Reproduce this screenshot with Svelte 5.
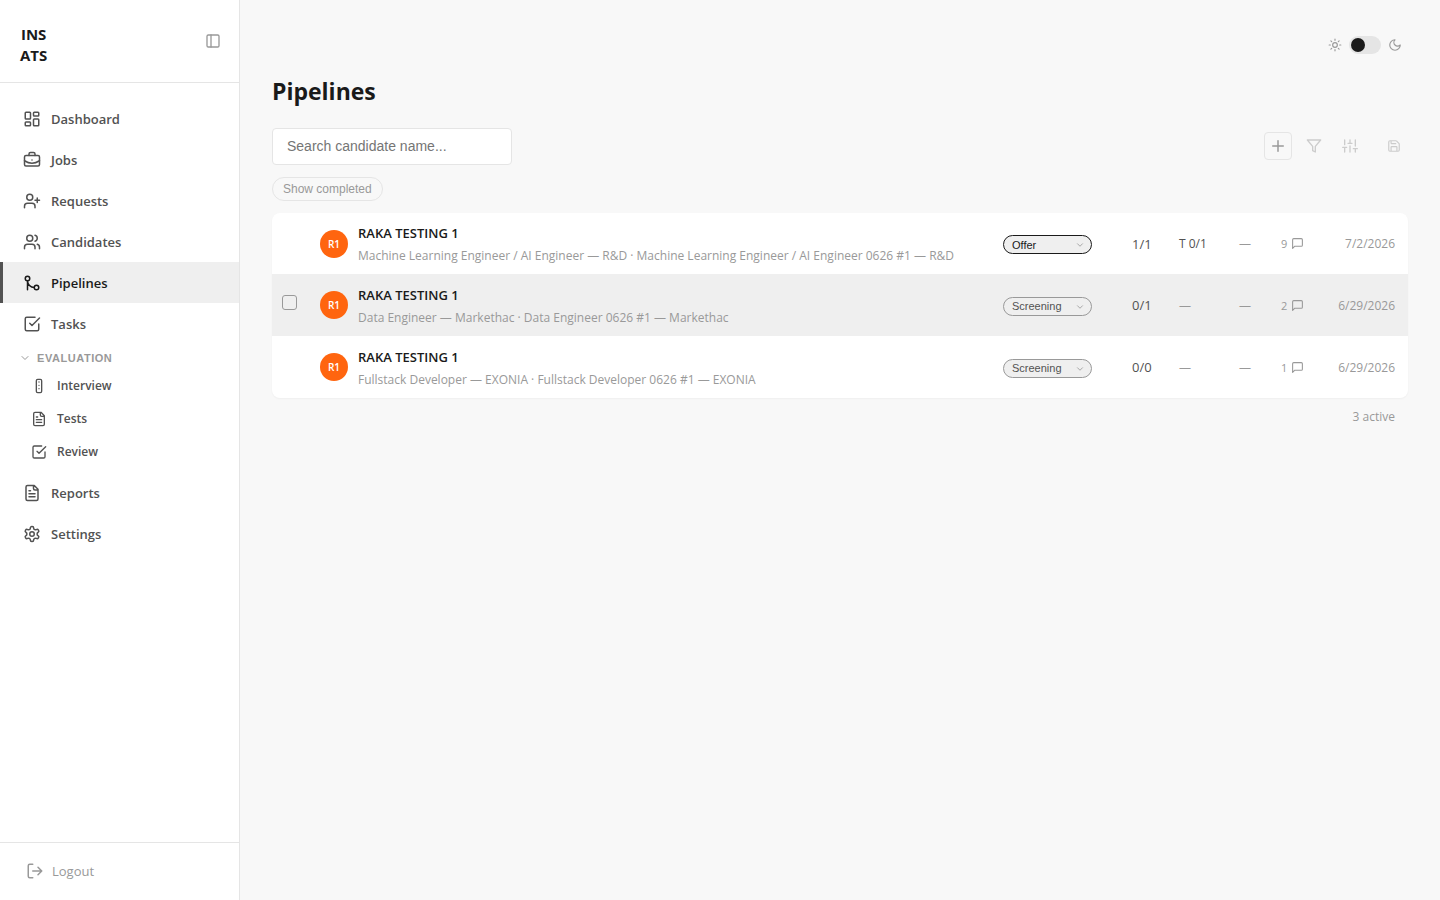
<script lang="ts">
  type Row = {
    id: number;
    name: string;
    detail: string;
    stage: string;
    interviews: string;
    tests: string;
    review: string;
    comments: number;
    date: string;
    hovered?: boolean;
  };

  const stages = ['Screening', 'Interview', 'Offer', 'Hired'];

  const mainNav = [
    { label: 'Dashboard', icon: 'dashboard' },
    { label: 'Jobs', icon: 'briefcase' },
    { label: 'Requests', icon: 'userPlus' },
    { label: 'Candidates', icon: 'users' },
    { label: 'Pipelines', icon: 'merge' },
    { label: 'Tasks', icon: 'check' },
  ];
  const evaluationNav = [
    { label: 'Interview', icon: 'panel' },
    { label: 'Tests', icon: 'file' },
    { label: 'Review', icon: 'check' },
  ];
  const bottomNav = [
    { label: 'Reports', icon: 'file' },
    { label: 'Settings', icon: 'gear' },
  ];

  let rows: Row[] = $state([
    {
      id: 1,
      name: 'RAKA TESTING 1',
      detail: 'Machine Learning Engineer / AI Engineer — R&D · Machine Learning Engineer / AI Engineer 0626 #1 — R&D',
      stage: 'Offer',
      interviews: '1/1',
      tests: 'T 0/1',
      review: '—',
      comments: 9,
      date: '7/2/2026',
    },
    {
      id: 2,
      name: 'RAKA TESTING 1',
      detail: 'Data Engineer — Markethac · Data Engineer 0626 #1 — Markethac',
      stage: 'Screening',
      interviews: '0/1',
      tests: '—',
      review: '—',
      comments: 2,
      date: '6/29/2026',
      hovered: true,
    },
    {
      id: 3,
      name: 'RAKA TESTING 1',
      detail: 'Fullstack Developer — EXONIA · Fullstack Developer 0626 #1 — EXONIA',
      stage: 'Screening',
      interviews: '0/0',
      tests: '—',
      review: '—',
      comments: 1,
      date: '6/29/2026',
    },
  ]);

  let current = $state('Pipelines');
  let evaluationOpen = $state(true);
  let dark = $state(false);
  let search = $state('');
  let showCompleted = $state(false);

  const visibleRows = $derived(
    rows.filter((row) => row.name.toLowerCase().includes(search.toLowerCase()))
  );
</script>

{#snippet icon(name: string, size: number)}
  <svg class="icon" width={size} height={size} viewBox="0 0 24 24" stroke-width="2" aria-hidden="true">
    {#if name === 'dashboard'}
      <rect x="3" y="3" width="7" height="9" rx="1" />
      <rect x="14" y="3" width="7" height="5" rx="1" />
      <rect x="14" y="12" width="7" height="9" rx="1" />
      <rect x="3" y="16" width="7" height="5" rx="1" />
    {:else if name === 'briefcase'}
      <path d="M12 12h.01M16 6V4a2 2 0 0 0-2-2h-4a2 2 0 0 0-2 2v2M22 13a18.15 18.15 0 0 1-20 0" />
      <rect x="2" y="6" width="20" height="14" rx="2" />
    {:else if name === 'userPlus'}
      <path d="M16 21v-2a4 4 0 0 0-4-4H6a4 4 0 0 0-4 4v2M19 8v6M22 11h-6" />
      <circle cx="9" cy="7" r="4" />
    {:else if name === 'users'}
      <path d="M16 21v-2a4 4 0 0 0-4-4H6a4 4 0 0 0-4 4v2M22 21v-2a4 4 0 0 0-3-3.87M16 3.13a4 4 0 0 1 0 7.75" />
      <circle cx="9" cy="7" r="4" />
    {:else if name === 'merge'}
      <circle cx="18" cy="18" r="3" />
      <circle cx="6" cy="6" r="3" />
      <path d="M6 21V9a9 9 0 0 0 9 9" />
    {:else if name === 'check'}
      <path d="m9 11 3 3L22 4M21 12v7a2 2 0 0 1-2 2H5a2 2 0 0 1-2-2V5a2 2 0 0 1 2-2h11" />
    {:else if name === 'panel'}
      <rect x="8" y="2" width="8" height="20" rx="2" />
      <path d="M12 6h.01M12 11h.01M12 16h.01" />
    {:else if name === 'file'}
      <path d="M15 2H6a2 2 0 0 0-2 2v16a2 2 0 0 0 2 2h12a2 2 0 0 0 2-2V7ZM14 2v4a2 2 0 0 0 2 2h4M10 9H8M16 13H8M16 17H8" />
    {:else if name === 'gear'}
      <path d="M12.22 2h-.44a2 2 0 0 0-2 2v.18a2 2 0 0 1-1 1.73l-.43.25a2 2 0 0 1-2 0l-.15-.08a2 2 0 0 0-2.73.73l-.22.38a2 2 0 0 0 .73 2.73l.15.1a2 2 0 0 1 1 1.72v.51a2 2 0 0 1-1 1.74l-.15.09a2 2 0 0 0-.73 2.73l.22.38a2 2 0 0 0 2.73.73l.15-.08a2 2 0 0 1 2 0l.43.25a2 2 0 0 1 1 1.73V20a2 2 0 0 0 2 2h.44a2 2 0 0 0 2-2v-.18a2 2 0 0 1 1-1.73l.43-.25a2 2 0 0 1 2 0l.15.08a2 2 0 0 0 2.73-.73l.22-.39a2 2 0 0 0-.73-2.73l-.15-.08a2 2 0 0 1-1-1.74v-.5a2 2 0 0 1 1-1.74l.15-.09a2 2 0 0 0 .73-2.73l-.22-.38a2 2 0 0 0-2.73-.73l-.15.08a2 2 0 0 1-2 0l-.43-.25a2 2 0 0 1-1-1.73V4a2 2 0 0 0-2-2z" />
      <circle cx="12" cy="12" r="3" />
    {:else if name === 'logout'}
      <path d="M9 21H5a2 2 0 0 1-2-2V5a2 2 0 0 1 2-2h4M16 17l5-5-5-5M21 12H9" />
    {:else if name === 'sidebar'}
      <rect x="3" y="3" width="18" height="18" rx="2" />
      <path d="M9 3v18" />
    {:else if name === 'chevron'}
      <path d="m6 9 6 6 6-6" />
    {:else if name === 'sun'}
      <circle cx="12" cy="12" r="4" />
      <path d="M12 2v2M12 20v2M4.93 4.93l1.41 1.41M17.66 17.66l1.41 1.41M2 12h2M20 12h2M6.34 17.66l-1.41 1.41M19.07 4.93l-1.41 1.41" />
    {:else if name === 'moon'}
      <path d="M12 3a6 6 0 0 0 9 9 9 9 0 1 1-9-9Z" />
    {:else if name === 'plus'}
      <path d="M5 12h14M12 5v14" />
    {:else if name === 'filter'}
      <path d="M22 3H2l8 9.46V19l4 2v-8.54L22 3Z" />
    {:else if name === 'sliders'}
      <path d="M4 21v-7M4 10V3M12 21v-9M12 8V3M20 21v-5M20 12V3M1 14h6M9 8h6M17 16h6" />
    {:else if name === 'save'}
      <path d="M15.2 3a2 2 0 0 1 1.4.6l3.8 3.8a2 2 0 0 1 .6 1.4V19a2 2 0 0 1-2 2H5a2 2 0 0 1-2-2V5a2 2 0 0 1 2-2zM17 21v-7a1 1 0 0 0-1-1H8a1 1 0 0 0-1 1v7M7 3v4a1 1 0 0 0 1 1h7" />
    {:else if name === 'comment'}
      <path d="M21 15a2 2 0 0 1-2 2H7l-4 4V5a2 2 0 0 1 2-2h14a2 2 0 0 1 2 2z" />
    {/if}
  </svg>
{/snippet}

{#snippet navLink(item: { label: string; icon: string }, size: number)}
  <a
    href="#{item.label.toLowerCase()}"
    class="nav-link"
    class:active={current === item.label}
    onclick={() => (current = item.label)}
  >
    {@render icon(item.icon, size)}
    {item.label}
  </a>
{/snippet}

<div class="app">
  <aside class="sidebar">
    <header class="brand">
      <div class="logo">INS<br />ATS</div>
      <button class="plain" aria-label="Collapse sidebar">{@render icon('sidebar', 16)}</button>
    </header>

    <nav>
      {#each mainNav as item}
        {@render navLink(item, 18)}
      {/each}
      <button class="plain group" aria-expanded={evaluationOpen} onclick={() => (evaluationOpen = !evaluationOpen)}>
        {@render icon('chevron', 12)}
        EVALUATION
      </button>
      {#if evaluationOpen}
        <div class="sub">
          {#each evaluationNav as item}
            {@render navLink(item, 16)}
          {/each}
        </div>
      {/if}
      {#each bottomNav as item}
        {@render navLink(item, 18)}
      {/each}
    </nav>

    <footer>
      <button class="plain logout">{@render icon('logout', 18)} Logout</button>
    </footer>
  </aside>

  <main>
    <div class="theme">
      {@render icon('sun', 14)}
      <label class="switch">
        <input type="checkbox" role="switch" aria-label="Dark mode" bind:checked={dark} />
      </label>
      {@render icon('moon', 14)}
    </div>

    <h1>Pipelines</h1>

    <div class="toolbar">
      <input class="search" type="text" aria-label="Search candidate name" placeholder="Search candidate name..." bind:value={search} />
      <div class="tools">
        <button class="tool add" aria-label="Add">{@render icon('plus', 18)}</button>
        <button class="tool" aria-label="Filter">{@render icon('filter', 16)}</button>
        <button class="tool" aria-label="Adjust columns">{@render icon('sliders', 16)}</button>
        <button class="tool save" aria-label="Save view">{@render icon('save', 14)}</button>
      </div>
    </div>

    <button class="pill" aria-pressed={showCompleted} onclick={() => (showCompleted = !showCompleted)}>
      Show completed
    </button>

    <table>
      <colgroup>
        <col class="col-check" />
        <col />
        <col class="col-stage" />
        <col class="col-interviews" />
        <col class="col-tests" />
        <col class="col-review" />
        <col class="col-comments" />
        <col class="col-date" />
      </colgroup>
      <tbody>
        {#each visibleRows as row (row.id)}
          <tr class:hovered={row.hovered}>
            <td><input class="tick" type="checkbox" aria-label="Select {row.name}" /></td>
            <td>
              <div class="candidate">
                <span class="avatar">R1</span>
                <div class="who">
                  <div class="name">{row.name}</div>
                  <div class="detail">{row.detail}</div>
                </div>
              </div>
            </td>
            <td>
              <div class="stage" class:offer={row.stage === 'Offer'}>
                <select aria-label="Stage" bind:value={row.stage}>
                  {#each stages as stage}
                    <option>{stage}</option>
                  {/each}
                </select>
                {@render icon('chevron', 10)}
              </div>
            </td>
            <td class="count">{row.interviews}</td>
            <td class="tests" class:empty={row.tests === '—'}>{row.tests}</td>
            <td class="empty">{row.review}</td>
            <td><span class="comments">{row.comments} {@render icon('comment', 13)}</span></td>
            <td class="date">{row.date}</td>
          </tr>
        {/each}
      </tbody>
    </table>
    <p class="total">{visibleRows.length} active</p>
  </main>
</div>

<style>
  :global(body) {
    margin: 0;
    background: #f8f8f8;
  }
  .app {
    display: flex;
    min-height: 100vh;
    font-family: "Segoe UI", "Open Sans", "Noto Sans", sans-serif;
    font-size: 13px;
    color: #1a1a1a;
  }
  .icon {
    display: block;
    flex: none;
    fill: none;
    stroke: currentColor;
    stroke-linecap: round;
    stroke-linejoin: round;
  }
  .plain {
    border: 0;
    padding: 0;
    background: none;
    color: #999;
    font-family: inherit;
    cursor: pointer;
  }

  /* sidebar */
  .sidebar {
    box-sizing: border-box;
    width: 240px;
    flex: none;
    display: flex;
    flex-direction: column;
    background: #fff;
    border-right: 1px solid #e5e5e5;
  }
  .brand {
    display: flex;
    align-items: flex-start;
    justify-content: space-between;
    padding: 24px 18px 16px 20px;
    border-bottom: 1px solid #e5e5e5;
  }
  .brand .plain {
    padding-top: 9px;
  }
  .logo {
    font-size: 15px;
    line-height: 21px;
    font-weight: 700;
    text-align: center;
  }
  nav {
    flex: 1;
    padding-top: 15px;
  }
  .nav-link {
    display: flex;
    align-items: center;
    gap: 10px;
    height: 41px;
    padding-left: 20px;
    border-left: 3px solid transparent;
    color: #525252;
    font-weight: 600;
    text-decoration: none;
  }
  .nav-link.active {
    background: #efefef;
    border-left-color: #525252;
    color: #1a1a1a;
  }
  .group {
    display: flex;
    align-items: center;
    gap: 6px;
    height: 25px;
    padding: 3px 0 0 19px;
    font-family: "Liberation Sans", Arial, sans-serif;
    font-size: 11px;
    font-weight: 700;
    letter-spacing: 0.05em;
  }
  .sub {
    margin-bottom: 4px;
  }
  .sub .nav-link {
    height: 33px;
    padding-left: 28px;
    font-size: 12px;
  }
  footer {
    padding: 19px 26px 20px;
    border-top: 1px solid #e5e5e5;
  }
  .logout {
    display: flex;
    align-items: center;
    gap: 8px;
    font-size: 13px;
    line-height: 17px;
  }

  /* content */
  main {
    flex: 1;
    min-width: 0;
    padding: 36px 32px;
  }
  .theme {
    display: flex;
    justify-content: flex-end;
    align-items: center;
    gap: 7px;
    padding-right: 6px;
    color: #999;
  }
  .switch {
    display: flex;
  }
  .switch input {
    appearance: none;
    display: flex;
    align-items: center;
    box-sizing: border-box;
    width: 32px;
    height: 18px;
    margin: 0;
    padding: 2px;
    border-radius: 9px;
    background: #e5e5e5;
    cursor: pointer;
  }
  .switch input::before {
    content: "";
    width: 14px;
    height: 14px;
    border-radius: 50%;
    background: #1a1a1a;
  }
  .switch input:checked {
    justify-content: flex-end;
  }
  h1 {
    margin: 20px 0;
    font-size: 23px;
    line-height: 34px;
    font-weight: 700;
  }
  .toolbar {
    display: flex;
    align-items: flex-start;
    justify-content: space-between;
  }
  .search {
    box-sizing: border-box;
    width: 240px;
    height: 37px;
    padding: 0 14px 2px;
    border: 1px solid #e5e5e5;
    border-radius: 4px;
    background: #fff;
    font-family: "Liberation Sans", Arial, sans-serif;
    font-size: 14px;
  }
  .search::placeholder {
    color: #757575;
  }
  .tools {
    display: flex;
    gap: 8px;
    padding-top: 4px;
  }
  .tool {
    display: flex;
    align-items: center;
    justify-content: center;
    width: 28px;
    height: 28px;
    padding: 0;
    border: 1px solid transparent;
    border-radius: 4px;
    background: none;
    color: #ccc;
  }
  .tool.add {
    border-color: #e5e5e5;
    color: #999;
  }
  .tool.save {
    margin-left: 8px;
  }
  .pill {
    display: block;
    height: 24px;
    margin: 12px 0;
    padding: 0 10px;
    border: 1px solid #e5e5e5;
    border-radius: 12px;
    background: none;
    color: #999;
    font-family: "Liberation Sans", Arial, sans-serif;
    font-size: 12px;
  }

  /* candidate list */
  table {
    width: 100%;
    table-layout: fixed;
    border-spacing: 0;
    border-radius: 8px;
    overflow: hidden;
    background: #fff;
    box-shadow: 0 1px 2px rgba(0, 0, 0, 0.04);
  }
  .col-check {
    width: 38px;
  }
  .col-stage {
    width: 129px;
  }
  .col-interviews {
    width: 47px;
  }
  .col-tests {
    width: 60px;
  }
  .col-review,
  .col-comments {
    width: 42px;
  }
  .col-date {
    width: 95px;
  }
  td {
    height: 62px;
    padding: 0 0 0 10px;
    white-space: nowrap;
  }
  tr:first-child td {
    height: 61px;
  }
  .hovered {
    background: #efefef;
  }
  .tick {
    appearance: none;
    display: block;
    box-sizing: border-box;
    width: 15px;
    height: 15px;
    margin: 0 0 5px;
    border: 1px solid #999;
    border-radius: 3px;
    opacity: 0;
  }
  .tick:checked {
    background: #525252;
  }
  .hovered .tick,
  tr:hover .tick,
  .tick:checked {
    opacity: 1;
  }
  .candidate {
    display: flex;
    align-items: center;
    gap: 10px;
  }
  .avatar {
    width: 28px;
    flex: none;
    border-radius: 50%;
    background: #ff650f;
    color: #fff;
    font-size: 10px;
    line-height: 28px;
    font-weight: 600;
    text-align: center;
  }
  .who {
    min-width: 0;
    padding-top: 1px;
  }
  .name {
    font-weight: 600;
    line-height: 20px;
  }
  .detail {
    margin-top: 4px;
    overflow: hidden;
    text-overflow: ellipsis;
    color: #999;
    font-size: 12px;
    line-height: 18px;
  }
  .stage {
    position: relative;
    width: 89px;
    margin-top: 2px;
    color: #999;
  }
  .stage .icon {
    position: absolute;
    top: 5px;
    right: 7px;
    pointer-events: none;
  }
  .stage select {
    appearance: none;
    display: block;
    box-sizing: border-box;
    width: 100%;
    height: 19px;
    padding: 0 8px;
    border: 1px solid #999;
    border-radius: 10px;
    background: #efefef;
    color: #525252;
    font-family: "Liberation Sans", Arial, sans-serif;
    font-size: 11px;
  }
  .stage.offer select {
    border-color: #1a1a1a;
    color: #1a1a1a;
  }
  .count,
  .tests {
    color: #525252;
  }
  .tests {
    font-size: 12px;
  }
  td.empty {
    color: #999;
    font-size: 12px;
  }
  .comments {
    display: flex;
    align-items: center;
    gap: 4px;
    color: #999;
    font-size: 11px;
  }
  .date {
    padding: 0 13px 0 0;
    color: #999;
    font-size: 12px;
    text-align: right;
  }
  .total {
    margin: 10px 13px;
    color: #999;
    font-size: 12px;
    line-height: 18px;
    text-align: right;
  }
</style>
